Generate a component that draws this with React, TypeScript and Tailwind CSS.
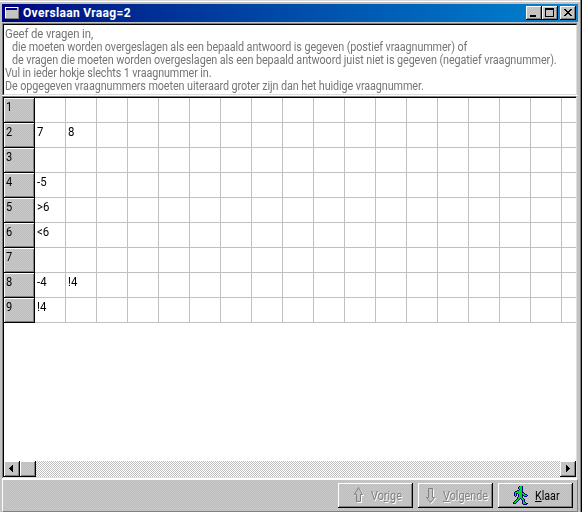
import type { ReactNode } from 'react';

const rows: string[][] = [[], ['7', '8'], [], ['-5'], ['>6'], ['<6'], [], ['-4', '!4'], ['!4']];
const columns = Array.from({ length: 18 }, (_, i) => i);

const face = 'bg-[#c3c3c3] bg-[repeating-conic-gradient(#bfbfbf_0_25%,#c7c7c7_0_50%)] bg-[length:2px_2px]';
const raised = `${face} shadow-[inset_-1px_-1px_0_#000,inset_1px_1px_0_#fff,inset_-2px_-2px_0_#808080]`;

function Caption({ children }: { children: ReactNode }) {
  return <button className={`h-[14px] w-4 shrink-0 ${raised}`}>{children}</button>;
}

function Glyph({ d, w = 16, h = 14 }: { d: string; w?: number; h?: number }) {
  return (
    <svg width={w} height={h} viewBox={`0 0 ${w} ${h}`} className="block" shapeRendering="crispEdges">
      <path d={d} fill="#000" />
    </svg>
  );
}

function Arrow({ down = false }: { down?: boolean }) {
  const d = down
    ? 'M4.5 15.5L8.5 10.5H6.5V1.5H2.5V10.5H.5Z'
    : 'M4.5 .5L8.5 7.5H6.5V14.5H2.5V7.5H.5Z';
  return (
    <svg width="11" height="17" viewBox="0 0 11 17" className="block shrink-0">
      <path d={d} transform="translate(1 1)" fill="none" stroke="#fff" />
      <path d={d} fill="#c3c3c3" stroke="#808080" />
    </svg>
  );
}

// b = outline, g = body, . = empty
const runner = [
  '......bggb......',
  '.....bgggb......',
  '.....bgggb......',
  '......bggb......',
  '....bbgggb......',
  '..bbgggggb......',
  '.bgggggggbb.....',
  '.bgbbggggggb....',
  '.bgb.bgggbggbb..',
  '.bgb.bgggbbgggb.',
  '..b..bgggb.bbb..',
  '....bggggb......',
  '....bggbggb.....',
  '...bggb.bggb....',
  '..bggb...bgb....',
  '.bggb....bgb....',
  'bggb.....bggb...',
  'bbb......bgggbb.',
  '..........bbbb..',
];

function Runner() {
  return (
    <svg width="16" height="19" viewBox="0 0 16 19" className="block shrink-0" shapeRendering="crispEdges">
      {runner.flatMap((line, y) =>
        [...line].map((p, x) =>
          p === '.' ? null : (
            <rect key={`${x}-${y}`} x={x} y={y} width="1" height="1" fill={p === 'b' ? '#000080' : '#00dc10'} />
          ),
        ),
      )}
    </svg>
  );
}

const textLines = [
  { text: 'Geef de vragen in,', cls: 'scale-x-[.945]' },
  { text: 'die moeten worden overgeslagen als een bepaald antwoord is gegeven (postief vraagnummer) of', cls: 'ml-[7px] scale-x-[.898]' },
  { text: 'de vragen die moeten worden overgeslagen als een bepaald antwoord juist niet is gegeven (negatief vraagnummer).', cls: 'ml-[7px] scale-x-[.902]' },
  { text: 'Vul in ieder hokje slechts 1 vraagnummer in.', cls: 'scale-x-[.896]' },
  { text: 'De opgegeven vraagnummers moeten uiteraard groter zijn dan het huidige vraagnummer.', cls: 'scale-x-[.9]' },
];

export default function App() {
  return (
    <div className={`flex h-[512px] w-[582px] flex-col overflow-hidden border-r border-black pl-[2px] font-['Roboto',sans-serif] text-[12px] leading-[13px] text-black shadow-[inset_-1px_0_0_#808080,inset_0_1px_0_#d8d8d8,inset_0_2px_0_#fff] ${face}`}>
      <header className="mt-1 flex h-[18px] w-[576px] shrink-0 items-center bg-linear-to-r from-[#000080] to-[#1084d0] pl-[3px]">
        <svg width="14" height="12" viewBox="0 0 14 12" className="block" shapeRendering="crispEdges">
          <path d="M0 0h14v12H0z" fill="#808080" />
          <path d="M0 0h13v11H0z" fill="#fff" />
          <path d="M1 1h12v10H1z" fill="#c3c3c3" />
          <path d="M1 1h11v2H1z" fill="#000080" />
        </svg>
        <h1 className="ml-[4px] flex-1 text-[12px] font-bold tracking-[0.33px] whitespace-nowrap text-white">Overslaan Vraag=2</h1>
        <Caption><Glyph d="M4 9h6v2H4z" /></Caption>
        <Caption><Glyph d="M3 2h9v9H3zM4 4v6h7V4z" /></Caption>
        <div className="w-[2px]" />
        <Caption><Glyph d="M4 3h2v1h1v1h2V4h1V3h2v1h-1v1h-1v1H9v1h1v1h1v1h1v1h-2V9H9V8H7v1H6v1H4V9h1V8h1V7h1V6H6V5H5V4H4z" /></Caption>
        <div className="w-[2px]" />
      </header>

      <section className="mt-px h-[72px] w-[575px] shrink-0 border-t border-l border-[#808080]">
        <div className="h-[71px] border-t border-r border-b border-l border-t-black border-r-[#dedede] border-b-[#dedede] border-l-black bg-white pt-[3px] pl-[1px] text-[#757575]">
          {textLines.map(({ text, cls }) => (
            <p key={text} className={`w-max origin-left tracking-[-0.1px] whitespace-nowrap ${cls}`}>
              {text}
            </p>
          ))}
        </div>
      </section>
      <div className="h-px w-[576px] shrink-0 bg-white" />

      <section className="flex h-[382px] w-[575px] shrink-0 flex-col border-t border-r border-l border-t-[#808080] border-r-[#dedede] border-l-[#808080]">
        <div className="flex h-[380px] w-[573px] flex-col overflow-hidden border-t border-l border-black bg-white">
          <div className="h-[363px] overflow-hidden">
            {rows.map((cells, r) => (
              <div key={r} className="flex h-[25px]">
                <div className={`h-[25px] w-[31px] shrink-0 border-r border-b border-black pt-[3px] pl-[2px] shadow-[inset_1px_1px_0_#fff,inset_-1px_-1px_0_#808080] ${face}`}>
                  <span className="inline-block origin-left scale-x-[.92]">{r + 1}</span>
                </div>
                {columns.map((c) => (
                  <div key={c} className="h-[25px] w-[31px] shrink-0 border-r border-b border-[#c0c0c0] pt-[3px] pl-[2px]">
                    <span className="inline-block origin-left scale-x-[.95]">{cells[c]}</span>
                  </div>
                ))}
              </div>
            ))}
          </div>
          <div className="flex h-4 shrink-0 bg-[repeating-conic-gradient(#c0c0c0_0_25%,#fff_0_50%)] bg-[length:2px_2px]">
            <button className={`h-4 w-4 ${raised}`}>
              <Glyph w={16} h={16} d="M5 7h1V6h1V5h1V4h1v7H8v-1H7V9H6V8H5z" />
            </button>
            <div className={`h-4 w-4 ${raised}`} />
            <div className="flex-1" />
            <button className={`h-4 w-4 ${raised}`}>
              <Glyph w={16} h={16} d="M6 4h1v1h1v1h1v1h1v1H9v1H8v1H7v1H6z" />
            </button>
          </div>
        </div>
        <div className="h-px bg-[#dedede]" />
      </section>

      <footer className="flex h-[34px] w-[576px] shrink-0 gap-[5px] border-t-2 border-r border-b border-l border-t-white border-r-[#808080] border-b-[#808080] border-l-white pt-[3px] pl-[335px]">
        <button className={`flex h-[25px] w-[75px] items-center pl-[16px] text-[#808080] [text-shadow:1px_1px_0_#fff] ${raised}`}>
          <Arrow />
          <span className="mt-px ml-[6px] origin-left scale-x-[.9]">Vo<u>r</u>ige</span>
        </button>
        <button className={`flex h-[25px] w-[75px] items-center pl-[8px] text-[#808080] [text-shadow:1px_1px_0_#fff] ${raised}`}>
          <Arrow down />
          <span className="mt-px ml-[6px] origin-left scale-x-[.9]"><u>V</u>olgende</span>
        </button>
        <button className={`flex h-[25px] w-[75px] items-center pl-[15px] ${raised}`}>
          <Runner />
          <span className="mt-px ml-[6px] origin-left scale-x-[.89]"><u>K</u>laar</span>
        </button>
      </footer>
    </div>
  );
}
